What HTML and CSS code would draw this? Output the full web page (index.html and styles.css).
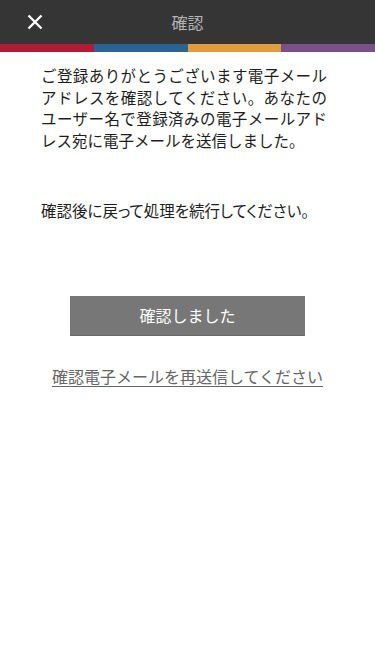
FILE: index.html
```html
<!DOCTYPE html>
<html lang="ja">
<head>
<meta charset="utf-8">
<link rel="stylesheet" href="styles.css">
</head>
<body>
<header class="header">
  <div class="bar">
    <button class="close" aria-label="閉じる">
      <svg width="16" height="16" viewBox="0 0 16 16"><path d="M1.5 1.5L14.5 14.5M14.5 1.5L1.5 14.5" stroke="#fff" stroke-width="2.4" stroke-linecap="butt"/></svg>
    </button>
    <h1 class="title">確認</h1>
  </div>
  <div class="stripe">
    <span class="s1"></span><span class="s2"></span><span class="s3"></span><span class="s4"></span>
  </div>
</header>
<main class="content">
  <p class="msg">
    <span class="line">ご登録ありがとうございます電子メール</span>
    <span class="line">アドレスを確認してください。あなたの</span>
    <span class="line">ユーザー名で登録済みの電子メールアド</span>
    <span class="line last">レス宛に電子メールを送信しました。</span>
  </p>
  <p class="msg second">確認後に戻って処理を続行してください。</p>
  <div class="actions">
    <button class="confirm">確認しました</button>
    <a class="resend" href="#">確認電子メールを再送信してください</a>
  </div>
</main>
</body>
</html>
```
FILE: styles.css
```css
* { box-sizing: border-box; }
html, body { margin: 0; padding: 0; background: #fff; }
body {
  font-family: "Noto Sans CJK JP", "Noto Sans", sans-serif;
  color: #1e1e1e;
}
.header { display: flex; flex-direction: column; }
.bar {
  height: 44px;
  background: #353535;
  display: flex;
  align-items: center;
  justify-content: center;
  position: relative;
}
.close {
  position: absolute;
  left: 27px;
  top: 14px;
  width: 16px;
  height: 16px;
  padding: 0;
  border: 0;
  background: none;
  display: flex;
}
.title {
  margin: 0;
  font-size: 16px;
  font-weight: 400;
  color: #b4b4b4;
  line-height: 44px;
}
.stripe { display: flex; height: 8px; }
.stripe span { flex: 1; }
.s1 { background: #b11c34; }
.s2 { background: #2b6490; }
.s3 { background: #e19c3e; }
.s4 { background: #79508a; }
.content { padding: 13px 48px 0 41px; }
.msg {
  margin: 0;
  font-size: 15.5px;
  line-height: 21.5px;
}
.line {
  display: block;
  text-align: justify;
  text-align-last: justify;
  white-space: nowrap;
}
.line.last { text-align-last: left; }
.second {
  margin-top: 49px;
  white-space: nowrap;
  font-feature-settings: "palt";
}
.actions {
  display: flex;
  flex-direction: column;
  align-items: center;
  margin-top: 74px;
  margin-right: -7px;
}
.confirm {
  width: 235px;
  height: 40px;
  border: 0;
  background: #777;
  color: #fff;
  font-family: inherit;
  font-size: 16px;
  border-bottom: 1px solid #6a6a6a;
}
.resend {
  margin-top: 28px;
  font-size: 16px;
  color: #666;
  text-decoration: underline;
  text-underline-offset: 3px;
  text-decoration-thickness: 1px;
}
```
